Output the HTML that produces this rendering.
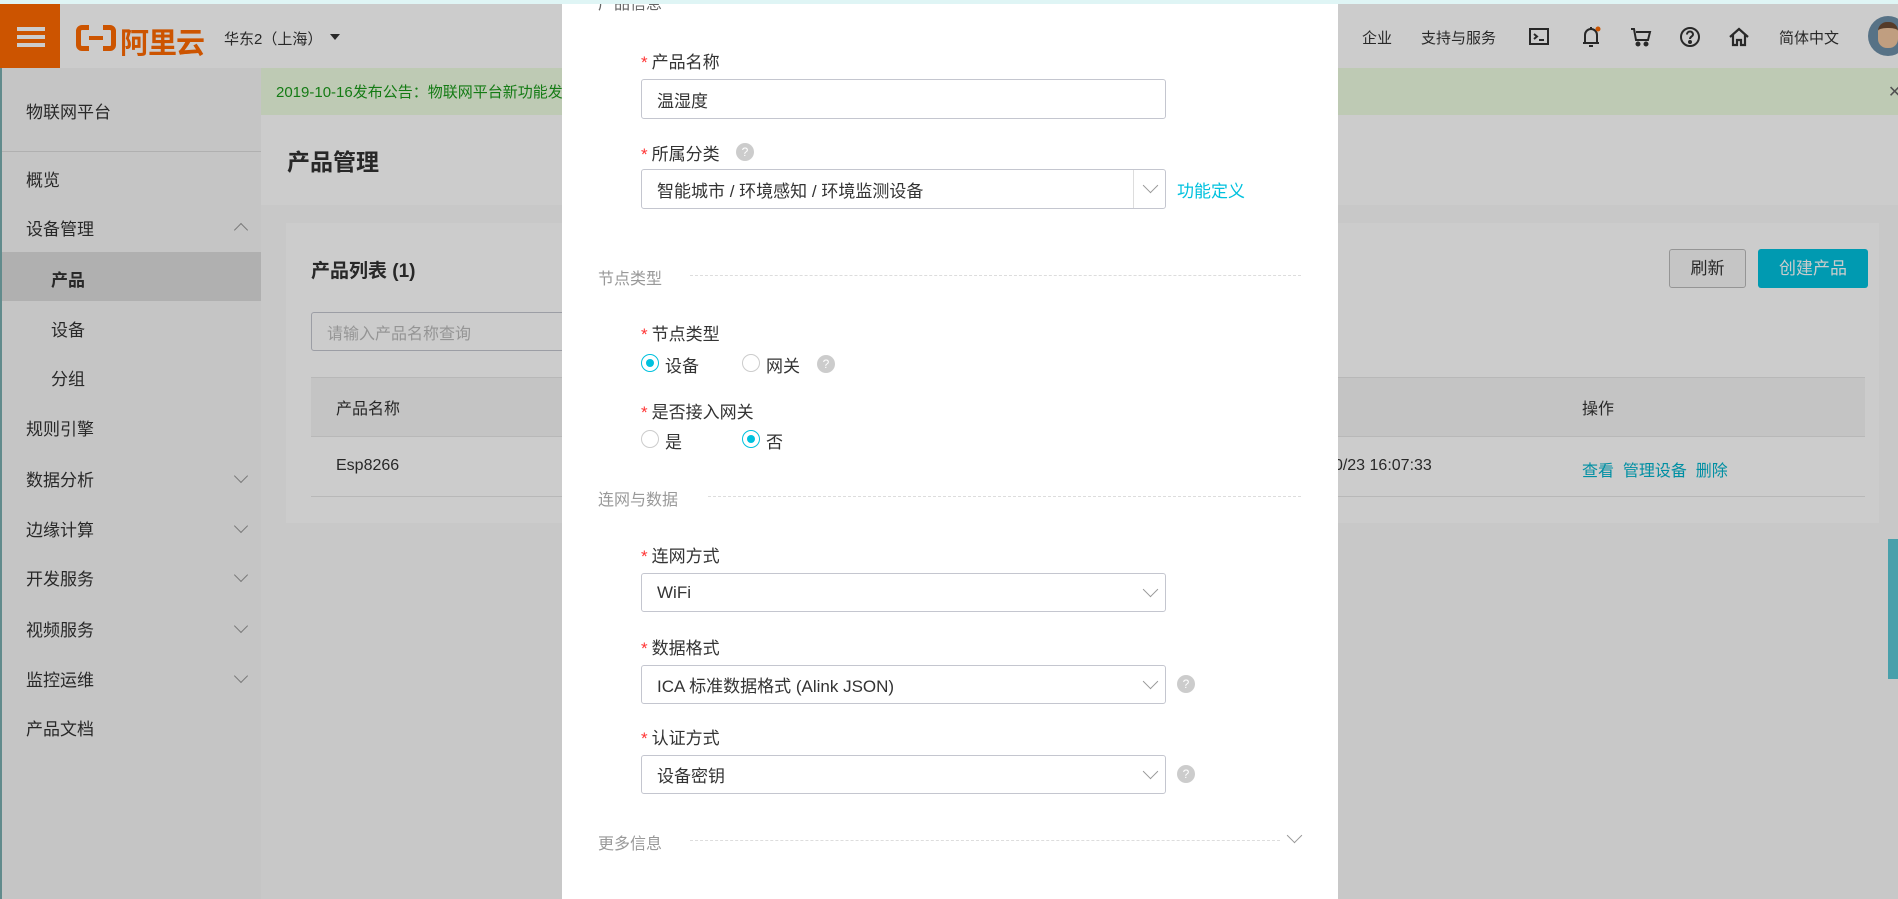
<!DOCTYPE html>
<html><head><meta charset="utf-8"><style>
*{box-sizing:border-box;margin:0;padding:0}
body{width:1898px;height:899px;overflow:hidden;position:relative;background:#fff;font-family:"Liberation Sans","Noto Sans CJK SC",sans-serif;color:#333}
.a{position:absolute;white-space:nowrap}
.hdr{left:0;top:0;width:1898px;height:68px;background:#fff;box-shadow:0 2px 3px rgba(0,0,0,.1)}
.side{left:0;top:68px;width:261px;height:831px;background:#f7f7f7;border-left:2px solid #7aaeb0}
.si{font-size:17px;color:#333}
.chev{width:10px;height:10px;border-right:1.5px solid #999;border-bottom:1.5px solid #999;transform:rotate(45deg)}
.ov{left:0;top:0;width:1898px;height:899px;background:rgba(0,0,0,.2)}
.modal{left:562px;top:0;width:776px;height:899px;background:#fff}
.lbl{font-size:17px;color:#333}
.lbl b{color:#f33;font-weight:normal;margin-right:4px}
.inp{border:1px solid #c4c6cf;border-radius:3px;background:#fff;font-size:17px;color:#333;padding-left:15px;display:flex;align-items:center}
.sec{font-size:16px;color:#999}
.dash{border-top:1px dashed #ddd;height:0}
.q{width:18px;height:18px;border-radius:50%;background:#ccc;color:#fff;font-size:12px;text-align:center;line-height:18px}
.rad{width:18px;height:18px;border-radius:50%;border:1px solid #ccc;background:#fff}
.rad.on{border:1.5px solid #00c1de}
.rad.on::after{content:"";position:absolute;left:3.5px;top:3.5px;width:8px;height:8px;border-radius:50%;background:#00c1de}
.sel-ch{width:11px;height:11px;border-right:1.3px solid #999;border-bottom:1.3px solid #999;transform:rotate(45deg)}
</style></head><body>
<!-- header -->
<div class="a hdr"></div>
<div class="a" style="left:0;top:4px;width:60px;height:64px;background:#ff6a00"></div>
<div class="a" style="left:17px;top:27px;width:28px;height:4px;background:#fff"></div>
<div class="a" style="left:17px;top:35px;width:28px;height:4px;background:#fff"></div>
<div class="a" style="left:17px;top:43px;width:28px;height:4px;background:#fff"></div>
<div class="a" style="left:76px;top:25px;width:40px;height:26px;border:5px solid #ff6a00;border-radius:6px;"></div>
<div class="a" style="left:89px;top:24px;width:14px;height:28px;background:#fff"></div>
<div class="a" style="left:89px;top:36px;width:14px;height:4px;background:#ff6a00"></div>
<div class="a" style="left:120px;top:20px;font-size:29px;font-weight:bold;color:#ff6a00;letter-spacing:-1px">阿里云</div>
<div class="a" style="left:224px;top:28px;font-size:15px;color:#333">华东2（上海）</div>
<div class="a" style="left:330px;top:34px;width:0;height:0;border-left:5px solid transparent;border-right:5px solid transparent;border-top:6px solid #333"></div>
<div class="a" style="left:1362px;top:27px;font-size:15px">企业</div>
<div class="a" style="left:1421px;top:27px;font-size:15px">支持与服务</div>
<svg class="a" style="left:1528px;top:26px" width="22" height="22" viewBox="0 0 22 22" fill="none" stroke="#333" stroke-width="2"><rect x="2" y="3" width="18" height="15"/><path d="M6 8l3 2.5-3 2.5M11 14h5"/></svg>
<svg class="a" style="left:1579px;top:24px" width="24" height="26" viewBox="0 0 24 26" fill="none" stroke="#333" stroke-width="2"><path d="M6 19V11a6 6 0 0112 0v8M4 19h16M10 22h4M12 3v2"/><circle cx="19" cy="5" r="2.5" fill="#ff6a00" stroke="none"/></svg>
<svg class="a" style="left:1630px;top:26px" width="22" height="22" viewBox="0 0 22 22" fill="none" stroke="#333" stroke-width="2"><path d="M1 3h3l2 11h12l2-8H6"/><circle cx="8" cy="18" r="1.5" fill="#333"/><circle cx="16" cy="18" r="1.5" fill="#333"/></svg>
<svg class="a" style="left:1679px;top:26px" width="22" height="22" viewBox="0 0 22 22" fill="none" stroke="#333" stroke-width="2"><circle cx="11" cy="11" r="9"/><path d="M8 8.5a3 3 0 116 0c0 2-3 2-3 4.5"/><circle cx="11" cy="16" r="1" fill="#333"/></svg>
<svg class="a" style="left:1728px;top:26px" width="22" height="22" viewBox="0 0 22 22" fill="none" stroke="#333" stroke-width="2.2"><path d="M2 11L11 3l9 8M5 9v10h4v-5h4v5h4V9"/></svg>
<div class="a" style="left:1779px;top:27px;font-size:15px">简体中文</div>
<div class="a" style="left:1868px;top:16px;width:40px;height:40px;border-radius:50%;background:#6d8fa8;overflow:hidden"><div style="position:absolute;left:10px;top:6px;width:20px;height:26px;border-radius:9px;background:#f0c6a0;border-top:6px solid #6b4a34"></div></div>
<div class="a" style="left:0;top:0;width:1898px;height:4px;background:#dff5f5;z-index:5"></div>
<!-- sidebar -->
<div class="a side"></div>
<div class="a si" style="left:26px;top:98px">物联网平台</div>
<div class="a" style="left:2px;top:151px;width:259px;height:1px;background:#ddd"></div>
<div class="a si" style="left:26px;top:166px">概览</div>
<div class="a si" style="left:26px;top:215px">设备管理</div>
<div class="a chev" style="left:236px;top:225px;transform:rotate(225deg)"></div>
<div class="a" style="left:2px;top:252px;width:259px;height:49px;background:#dcdcdc"></div>
<div class="a si" style="left:51px;top:266px;font-weight:bold">产品</div>
<div class="a si" style="left:51px;top:316px">设备</div>
<div class="a si" style="left:51px;top:365px">分组</div>
<div class="a si" style="left:26px;top:415px">规则引擎</div>
<div class="a si" style="left:26px;top:466px">数据分析</div><div class="a chev" style="left:236px;top:471px"></div>
<div class="a si" style="left:26px;top:516px">边缘计算</div><div class="a chev" style="left:236px;top:521px"></div>
<div class="a si" style="left:26px;top:565px">开发服务</div><div class="a chev" style="left:236px;top:570px"></div>
<div class="a si" style="left:26px;top:616px">视频服务</div><div class="a chev" style="left:236px;top:621px"></div>
<div class="a si" style="left:26px;top:666px">监控运维</div><div class="a chev" style="left:236px;top:671px"></div>
<div class="a si" style="left:26px;top:715px">产品文档</div>
<!-- content -->
<div class="a" style="left:261px;top:68px;width:1637px;height:47px;background:#eefde2"></div>
<div class="a" style="left:276px;top:81px;font-size:15px;color:#1a9a1a">2019-10-16发布公告：物联网平台新功能发布</div>
<div class="a" style="left:1888px;top:82px;font-size:16px;color:#666">✕</div>
<div class="a" style="left:287px;top:143px;font-size:23px;font-weight:bold;color:#333">产品管理</div>
<div class="a" style="left:261px;top:205px;width:1637px;height:694px;background:#fafafa"></div>
<div class="a" style="left:286px;top:223px;width:1593px;height:300px;background:#fff"></div>
<div class="a" style="left:311px;top:256px;font-size:19px;font-weight:bold">产品列表 (1)</div>
<div class="a inp" style="left:311px;top:312px;width:300px;height:39px;color:#bbb;font-size:16px">请输入产品名称查询</div>
<div class="a" style="left:1669px;top:249px;width:77px;height:39px;border:1px solid #bbb;border-radius:3px;background:#f7f7f7;font-size:17px;text-align:center;line-height:37px">刷新</div>
<div class="a" style="left:1758px;top:249px;width:110px;height:39px;border-radius:3px;background:#00c1de;color:#fff;font-size:17px;text-align:center;line-height:39px">创建产品</div>
<div class="a" style="left:311px;top:377px;width:1554px;height:60px;background:#f5f5f5;border-top:1px solid #e6e6e6;border-bottom:1px solid #e6e6e6"></div>
<div class="a" style="left:336px;top:395px;font-size:16px;color:#333">产品名称</div>
<div class="a" style="left:1582px;top:395px;font-size:16px;color:#333">操作</div>
<div class="a" style="left:311px;top:496px;width:1554px;height:1px;background:#e6e6e6"></div>
<div class="a" style="left:336px;top:457px;font-size:16px">Esp8266</div>
<div class="a" style="left:1285px;top:457px;font-size:16px">2019/10/23 16:07:33</div>
<div class="a" style="left:1582px;top:457px;font-size:16px;color:#00b3cc">查看&nbsp;&nbsp;管理设备&nbsp;&nbsp;删除</div>
<div class="a" style="left:1888px;top:539px;width:10px;height:140px;background:#5bc9d6"></div>
<!-- overlay -->
<div class="a ov"></div>
<!-- modal -->
<div class="a modal">
 <div class="a sec" style="left:36px;top:-10px;color:#666">产品信息</div>
 <div class="a lbl" style="left:79px;top:48px"><b>*</b>产品名称</div>
 <div class="a inp" style="left:79px;top:79px;width:525px;height:40px">温湿度</div>
 <div class="a lbl" style="left:79px;top:140px"><b>*</b>所属分类</div>
 <div class="a q" style="left:174px;top:143px">?</div>
 <div class="a inp" style="left:79px;top:169px;width:525px;height:40px">智能城市 / 环境感知 / 环境监测设备</div>
 <div class="a" style="left:571px;top:170px;width:1px;height:38px;background:#ddd"></div>
 <div class="a sel-ch" style="left:583px;top:180px"></div>
 <div class="a" style="left:615px;top:177px;font-size:17px;color:#00c1de">功能定义</div>
 <div class="a sec" style="left:36px;top:265px">节点类型</div>
 <div class="a dash" style="left:128px;top:275px;width:611px"></div>
 <div class="a lbl" style="left:79px;top:320px"><b>*</b>节点类型</div>
 <div class="a rad on" style="left:79px;top:354px"></div><div class="a lbl" style="left:103px;top:352px">设备</div>
 <div class="a rad" style="left:180px;top:354px"></div><div class="a lbl" style="left:204px;top:352px">网关</div>
 <div class="a q" style="left:255px;top:355px">?</div>
 <div class="a lbl" style="left:79px;top:398px"><b>*</b>是否接入网关</div>
 <div class="a rad" style="left:79px;top:430px"></div><div class="a lbl" style="left:103px;top:428px">是</div>
 <div class="a rad on" style="left:180px;top:430px"></div><div class="a lbl" style="left:204px;top:428px">否</div>
 <div class="a sec" style="left:36px;top:486px">连网与数据</div>
 <div class="a dash" style="left:146px;top:496px;width:593px"></div>
 <div class="a lbl" style="left:79px;top:542px"><b>*</b>连网方式</div>
 <div class="a inp" style="left:79px;top:573px;width:525px;height:39px">WiFi</div>
 <div class="a sel-ch" style="left:583px;top:584px"></div>
 <div class="a lbl" style="left:79px;top:634px"><b>*</b>数据格式</div>
 <div class="a inp" style="left:79px;top:665px;width:525px;height:39px">ICA 标准数据格式 (Alink JSON)</div>
 <div class="a sel-ch" style="left:583px;top:676px"></div>
 <div class="a q" style="left:615px;top:675px">?</div>
 <div class="a lbl" style="left:79px;top:724px"><b>*</b>认证方式</div>
 <div class="a inp" style="left:79px;top:755px;width:525px;height:39px">设备密钥</div>
 <div class="a sel-ch" style="left:583px;top:766px"></div>
 <div class="a q" style="left:615px;top:765px">?</div>
 <div class="a sec" style="left:36px;top:830px">更多信息</div>
 <div class="a dash" style="left:128px;top:840px;width:590px"></div>
 <div class="a sel-ch" style="left:727px;top:830px"></div>
</div>
</body></html>
